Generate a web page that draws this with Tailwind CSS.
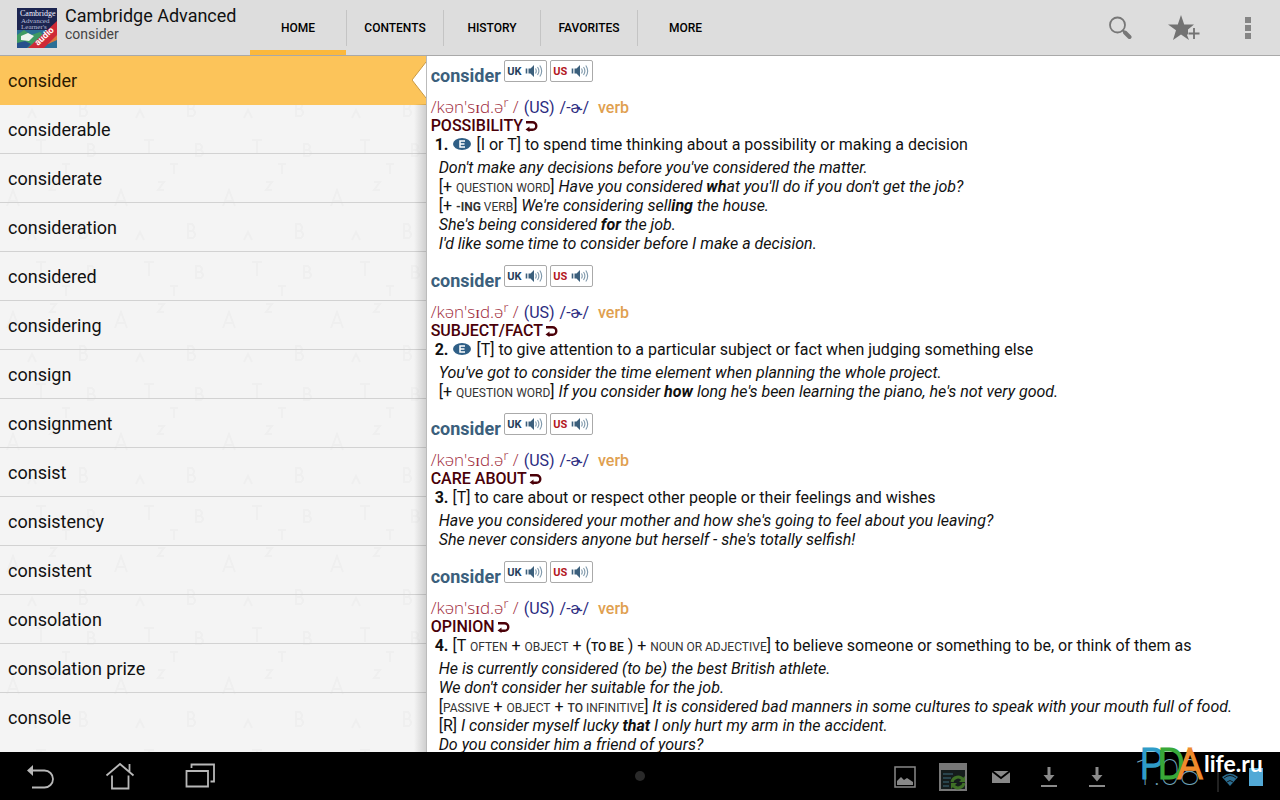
<!DOCTYPE html>
<html lang="en">
<head>
  <meta charset="UTF-8" />
  <meta name="viewport" content="width=device-width, initial-scale=1.0" />
  <title>Cambridge Advanced - consider</title>
  <script src="https://cdn.jsdelivr.net/npm/@tailwindcss/browser@4"></script>
</head>
<body class="h-screen flex flex-col overflow-hidden bg-white font-[Roboto,'Liberation_Sans',sans-serif] text-[#111]">

  <!-- Shared icons -->
  <svg class="hidden">
    <symbol id="speaker" viewBox="0 0 18 14">
      <path d="M1.500 4.500v5" stroke="#3b5f7c" stroke-width="1.600" fill="none" />
      <path d="M3.500 4.500h2L9 1v12L5.500 9.500h-2z" fill="#3b5f7c" />
      <path d="M10.500 4.500q1.500 2.500 0 5M12.500 3q2.800 4 0 8M14.800 1.500q3.800 5.500 0 11" stroke="#7d97aa" stroke-width="1.100" fill="none" />
    </symbol>
    <symbol id="level" viewBox="0 0 18 12">
      <ellipse cx="9" cy="6" rx="9" ry="6" fill="#2f5f86" />
      <path d="M12 3H7v6h5M7 6h4.500" stroke="#fff" stroke-width="1.500" fill="none" />
    </symbol>
    <symbol id="turn" viewBox="0 0 13 12">
      <path d="M1 2.200h6.500a3.800 3.800 0 0 1 0 7.600H3" stroke="#4a0008" stroke-width="2.400" fill="none" />
      <path d="M4.500 6.500V12L0.500 9.500z" fill="#4a0008" />
    </symbol>
    <symbol id="download" viewBox="0 0 18 22">
      <path d="M7.500 1h3v8h4L9 15.500 3.500 9h4zM1 19h16v2H1z" fill="#8a8a8a" />
    </symbol>
  </svg>

  <!-- Action bar -->
  <header class="h-14 shrink-0 flex items-stretch bg-[#dddddd] border-b border-[#a9a9a9]">
    <div class="w-[250px] flex items-center gap-2 pl-[17px]">
      <svg class="w-10 h-10 shrink-0" viewBox="0 0 40 40">
        <rect width="40" height="40" fill="#1c2550" />
        <path d="M0 22h40v18H0z" fill="#2b6f96" />
        <path d="M0 27l7-5 7 5 9-3 4 4-16 12H0z" fill="#3f9a62" />
        <path d="M4 28l7-3 6 3-5 5-8-1z" fill="#eef2ee" />
        <path d="M0 35l8-2 6 3-4 4H0z" fill="#27508c" />
        <path d="M27 32l13-6v6l-9 4z" fill="#d9773c" />
        <path d="M11 40l29-27v14L27 40z" fill="#cf2a36" />
        <text x="3" y="8" font-size="8" fill="#f4f4ff" font-family="Liberation Serif, serif">Cambridge</text>
        <text x="4" y="15" font-size="7" fill="#b9bfd8" font-family="Liberation Serif, serif">Advanced</text>
        <text x="4" y="21" font-size="7" fill="#b9bfd8" font-family="Liberation Serif, serif">Learner's</text>
        <text x="21" y="38" font-size="9" font-weight="bold" fill="#fff" transform="rotate(-43 21 38)">audio</text>
      </svg>
      <div class="pb-2">
        <h1 class="text-lg leading-5 whitespace-nowrap">Cambridge Advanced</h1>
        <p class="text-sm leading-4 text-[#444]">consider</p>
      </div>
    </div>

    <nav class="flex text-xs font-medium text-black">
      <a href="#" class="w-24 flex items-center justify-center border-b-[5px] border-[#fbb83c] pt-[5px]">HOME</a>
      <a href="#" class="w-[97px] flex items-center"><span class="w-full h-9 flex items-center justify-center border-l border-[#c4c4c4]">CONTENTS</span></a>
      <a href="#" class="w-[97px] flex items-center"><span class="w-full h-9 flex items-center justify-center border-l border-[#c4c4c4]">HISTORY</span></a>
      <a href="#" class="w-[97px] flex items-center"><span class="w-full h-9 flex items-center justify-center border-l border-[#c4c4c4]">FAVORITES</span></a>
      <a href="#" class="w-24 flex items-center"><span class="w-full h-9 flex items-center justify-center border-l border-[#c4c4c4]">MORE</span></a>
    </nav>

    <div class="ml-auto flex">
      <button class="w-16 flex items-center justify-center" aria-label="Search">
        <svg class="w-6 h-6" viewBox="0 0 24 24" fill="none" stroke="#777">
          <circle cx="9.500" cy="9" r="7.500" stroke-width="1.800" />
          <path d="M14.500 14l3 3" stroke-width="2" />
          <path d="M17 16.500l4.500 4.500" stroke-width="4" stroke-linecap="round" />
        </svg>
      </button>
      <button class="w-16 flex items-center justify-center" aria-label="Add to favorites">
        <svg class="w-8 h-[26px]" viewBox="0 0 32 26">
          <path d="M13 0l3.200 9.500H26l-6 5V19l-1 1 2 5-8-5.500L5 25l3-9.700L0 9.500h9.800z" fill="#727272" />
          <path d="M26 13v11M20.500 18.500h11" stroke="#ddd" stroke-width="4" />
          <path d="M26 13v11M20.500 18.500h11" stroke="#727272" stroke-width="1.800" />
        </svg>
      </button>
      <button class="w-16 flex items-center justify-center" aria-label="More options">
        <svg class="w-1.5 h-[22px]" viewBox="0 0 6 22" fill="#858585">
          <rect width="6" height="6" /><rect y="8" width="6" height="6" /><rect y="16" width="6" height="6" />
        </svg>
      </button>
    </div>
  </header>

  <main class="flex-1 min-h-0 flex">

    <!-- Word list -->
    <div class="relative w-1/3 shrink-0 overflow-hidden bg-[#f4f4f4] border-r border-[#bbb]">
      <!-- Faint letter pattern -->
      <svg class="absolute inset-0 w-full h-full" aria-hidden="true">
        <defs>
          <pattern id="letters" width="108" height="122" patternUnits="userSpaceOnUse" fill="none" stroke="#efefef" stroke-width="2">
            <path d="M7 28l6-16 6 16M9 23h8M80 46v14h5q4-3 0-7h-5 4q4-3 0-7zM36 84h10M41 84v14M88 88v12h5q4-3 0-6h-5 4q4-3 0-6zM50 4h6l-6 8h6M28 62l4-8 4 8M62 108h8M66 108v10" />
          </pattern>
        </defs>
        <rect width="100%" height="100%" fill="url(#letters)" />
      </svg>
      <ul class="relative text-lg">
        <li class="relative h-[49px] bg-[#fcc45a]">
          <a href="#" class="h-full flex items-center px-2 text-[#2b1a00]">consider</a>
          <svg class="absolute right-0 top-1.5 w-3.5 h-9" viewBox="0 0 14 36"><path d="M14 0v36L0 18z" fill="#fff" /><path d="M14 0L0 18l14 18" fill="none" stroke="#c99a45" /></svg>
        </li>
        <li class="h-[49px] border-b border-[#d2d2d2]"><a href="#" class="h-full flex items-center px-2 pt-0.5">considerable</a></li>
        <li class="h-[49px] border-b border-[#d2d2d2]"><a href="#" class="h-full flex items-center px-2 pt-0.5">considerate</a></li>
        <li class="h-[49px] border-b border-[#d2d2d2]"><a href="#" class="h-full flex items-center px-2 pt-0.5">consideration</a></li>
        <li class="h-[49px] border-b border-[#d2d2d2]"><a href="#" class="h-full flex items-center px-2 pt-0.5">considered</a></li>
        <li class="h-[49px] border-b border-[#d2d2d2]"><a href="#" class="h-full flex items-center px-2 pt-0.5">considering</a></li>
        <li class="h-[49px] border-b border-[#d2d2d2]"><a href="#" class="h-full flex items-center px-2 pt-0.5">consign</a></li>
        <li class="h-[49px] border-b border-[#d2d2d2]"><a href="#" class="h-full flex items-center px-2 pt-0.5">consignment</a></li>
        <li class="h-[49px] border-b border-[#d2d2d2]"><a href="#" class="h-full flex items-center px-2 pt-0.5">consist</a></li>
        <li class="h-[49px] border-b border-[#d2d2d2]"><a href="#" class="h-full flex items-center px-2 pt-0.5">consistency</a></li>
        <li class="h-[49px] border-b border-[#d2d2d2]"><a href="#" class="h-full flex items-center px-2 pt-0.5">consistent</a></li>
        <li class="h-[49px] border-b border-[#d2d2d2]"><a href="#" class="h-full flex items-center px-2 pt-0.5">consolation</a></li>
        <li class="h-[49px] border-b border-[#d2d2d2]"><a href="#" class="h-full flex items-center px-2 pt-0.5">consolation prize</a></li>
        <li class="h-[49px]"><a href="#" class="h-full flex items-center px-2">console</a></li>
      </ul>
      <div class="absolute right-0 top-12 bottom-0 w-3 bg-linear-to-l from-black/15 to-transparent"></div>
    </div>

    <!-- Article -->
    <article class="flex-1 min-w-0 overflow-y-auto [scrollbar-width:none] pl-1 text-base leading-[19px] space-y-2">

      <section>
        <div class="flex items-start gap-[3px] pt-1 pb-[11px]">
          <h2 class="pt-1.5 text-lg leading-5 font-bold text-[#3b5f7c]">consider</h2>
          <button class="w-[43px] h-[22px] flex items-center justify-center gap-1 rounded-xs border border-[#aaa] text-[11px] font-bold text-[#26405c]">UK <svg class="w-[18px] h-3.5"><use href="#speaker" /></svg></button>
          <button class="w-[43px] h-[22px] flex items-center justify-center gap-1 rounded-xs border border-[#aaa] text-[11px] font-bold text-[#b3191f]">US <svg class="w-[18px] h-3.5"><use href="#speaker" /></svg></button>
        </div>
        <p class="h-[19px] flex items-baseline gap-[5px] text-[#2b2b80]"><span class="font-['Open_Sans'] text-[17px] font-light text-[#a02c3c]">/kən'sɪd.ə<sup>r</sup> /</span> <span>(US)</span> <span>/-ɚ/</span> <b class="pl-1 font-medium text-[#e0a050]">verb</b></p>
        <h3 class="flex items-center font-medium text-[#4a0008]">POSSIBILITY<svg class="ml-0.5 w-[13px] h-3"><use href="#turn" /></svg></h3>
        <p class="pl-1"><b>1.</b> <svg class="inline mx-px w-[18px] h-3 align-baseline"><use href="#level" /></svg> [I or T] to spend time thinking about a possibility or making a decision</p>
        <div class="pt-1 pl-2 italic">
          <p>Don't make any decisions before you've considered the matter.</p>
          <p><span class="not-italic">[+ <span class="text-xs text-[#333]">QUESTION WORD</span>]</span> Have you considered <b>wh</b>at you'll do if you don't get the job?</p>
          <p><span class="not-italic">[+ <span class="text-xs text-[#333]"><b>-ING</b> VERB</span>]</span> We're considering sell<b>ing</b> the house.</p>
          <p>She's being considered <b>for</b> the job.</p>
          <p>I'd like some time to consider before I make a decision.</p>
        </div>
      </section>

      <section>
        <div class="flex items-start gap-[3px] pt-1 pb-[11px]">
          <h2 class="pt-1.5 text-lg leading-5 font-bold text-[#3b5f7c]">consider</h2>
          <button class="w-[43px] h-[22px] flex items-center justify-center gap-1 rounded-xs border border-[#aaa] text-[11px] font-bold text-[#26405c]">UK <svg class="w-[18px] h-3.5"><use href="#speaker" /></svg></button>
          <button class="w-[43px] h-[22px] flex items-center justify-center gap-1 rounded-xs border border-[#aaa] text-[11px] font-bold text-[#b3191f]">US <svg class="w-[18px] h-3.5"><use href="#speaker" /></svg></button>
        </div>
        <p class="h-[19px] flex items-baseline gap-[5px] text-[#2b2b80]"><span class="font-['Open_Sans'] text-[17px] font-light text-[#a02c3c]">/kən'sɪd.ə<sup>r</sup> /</span> <span>(US)</span> <span>/-ɚ/</span> <b class="pl-1 font-medium text-[#e0a050]">verb</b></p>
        <h3 class="flex items-center font-medium text-[#4a0008]">SUBJECT/FACT<svg class="ml-0.5 w-[13px] h-3"><use href="#turn" /></svg></h3>
        <p class="pl-1"><b>2.</b> <svg class="inline mx-px w-[18px] h-3 align-baseline"><use href="#level" /></svg> [T] to give attention to a particular subject or fact when judging something else</p>
        <div class="pt-1 pl-2 italic">
          <p>You've got to consider the time element when planning the whole project.</p>
          <p><span class="not-italic">[+ <span class="text-xs text-[#333]">QUESTION WORD</span>]</span> If you consider <b>how</b> long he's been learning the piano, he's not very good.</p>
        </div>
      </section>

      <section>
        <div class="flex items-start gap-[3px] pt-1 pb-[11px]">
          <h2 class="pt-1.5 text-lg leading-5 font-bold text-[#3b5f7c]">consider</h2>
          <button class="w-[43px] h-[22px] flex items-center justify-center gap-1 rounded-xs border border-[#aaa] text-[11px] font-bold text-[#26405c]">UK <svg class="w-[18px] h-3.5"><use href="#speaker" /></svg></button>
          <button class="w-[43px] h-[22px] flex items-center justify-center gap-1 rounded-xs border border-[#aaa] text-[11px] font-bold text-[#b3191f]">US <svg class="w-[18px] h-3.5"><use href="#speaker" /></svg></button>
        </div>
        <p class="h-[19px] flex items-baseline gap-[5px] text-[#2b2b80]"><span class="font-['Open_Sans'] text-[17px] font-light text-[#a02c3c]">/kən'sɪd.ə<sup>r</sup> /</span> <span>(US)</span> <span>/-ɚ/</span> <b class="pl-1 font-medium text-[#e0a050]">verb</b></p>
        <h3 class="flex items-center font-medium text-[#4a0008]">CARE ABOUT<svg class="ml-0.5 w-[13px] h-3"><use href="#turn" /></svg></h3>
        <p class="pl-1"><b>3.</b> [T] to care about or respect other people or their feelings and wishes</p>
        <div class="pt-1 pl-2 italic">
          <p>Have you considered your mother and how she's going to feel about you leaving?</p>
          <p>She never considers anyone but herself - she's totally selfish!</p>
        </div>
      </section>

      <section>
        <div class="flex items-start gap-[3px] pt-1 pb-[11px]">
          <h2 class="pt-1.5 text-lg leading-5 font-bold text-[#3b5f7c]">consider</h2>
          <button class="w-[43px] h-[22px] flex items-center justify-center gap-1 rounded-xs border border-[#aaa] text-[11px] font-bold text-[#26405c]">UK <svg class="w-[18px] h-3.5"><use href="#speaker" /></svg></button>
          <button class="w-[43px] h-[22px] flex items-center justify-center gap-1 rounded-xs border border-[#aaa] text-[11px] font-bold text-[#b3191f]">US <svg class="w-[18px] h-3.5"><use href="#speaker" /></svg></button>
        </div>
        <p class="h-[19px] flex items-baseline gap-[5px] text-[#2b2b80]"><span class="font-['Open_Sans'] text-[17px] font-light text-[#a02c3c]">/kən'sɪd.ə<sup>r</sup> /</span> <span>(US)</span> <span>/-ɚ/</span> <b class="pl-1 font-medium text-[#e0a050]">verb</b></p>
        <h3 class="flex items-center font-medium text-[#4a0008]">OPINION<svg class="ml-0.5 w-[13px] h-3"><use href="#turn" /></svg></h3>
        <p class="pl-1"><b>4.</b> [T <span class="text-xs text-[#333]">OFTEN</span> + <span class="text-xs text-[#333]">OBJECT</span> + (<b class="text-xs font-medium">TO BE</b> ) + <span class="text-xs text-[#333]">NOUN OR ADJECTIVE</span>] to believe someone or something to be, or think of them as</p>
        <div class="pt-1 pl-2 italic">
          <p>He is currently considered (to be) the best British athlete.</p>
          <p>We don't consider her suitable for the job.</p>
          <p><span class="not-italic">[<span class="text-xs text-[#333]">PASSIVE</span> + <span class="text-xs text-[#333]">OBJECT</span> + <span class="text-xs text-[#333]"><b class="font-medium">TO</b> INFINITIVE</span>]</span> It is considered bad manners in some cultures to speak with your mouth full of food.</p>
          <p><span class="not-italic">[R]</span> I consider myself lucky <b>that</b> I only hurt my arm in the accident.</p>
          <p>Do you consider him a friend of yours?</p>
        </div>
      </section>
    </article>
  </main>

  <!-- System bar -->
  <footer class="relative h-12 shrink-0 flex items-center justify-between bg-black">
    <div class="flex">
      <button class="w-20 flex justify-center" aria-label="Back">
        <svg class="w-8 h-8" viewBox="0 0 32 32" fill="none" stroke="#b8b8b8" stroke-width="1.800"><path d="M8 10.500h12.500a8.500 8.500 0 0 1 0 17H8" /><path d="M9 5v11l-6-5.500z" fill="#b8b8b8" stroke="none" /></svg>
      </button>
      <button class="w-20 flex justify-center" aria-label="Home">
        <svg class="w-8 h-8" viewBox="0 0 32 32" fill="none" stroke="#b8b8b8" stroke-width="1.800"><path d="M2.500 15.500L16 4l13.500 11.500M25.500 4v8M8 15.500v13h16.500v-13" /></svg>
      </button>
      <button class="w-20 flex justify-center" aria-label="Recent apps">
        <svg class="w-8 h-8" viewBox="0 0 32 32" fill="none" stroke="#b8b8b8" stroke-width="1.800"><path d="M2.500 11H24v15.500H2.500zM7.500 8V4.500H30v17h-3.500" /></svg>
      </button>
    </div>
    <span class="absolute left-1/2 top-1/2 -translate-1/2 w-2.5 h-2.5 rounded-full bg-[#2a2a2a]"></span>

    <div class="flex items-center pr-[159px] pt-0.5">
      <div class="w-12 flex justify-center">
        <svg class="w-[22px] h-[22px]" viewBox="0 0 22 22"><rect x="1" y="1" width="20" height="20" fill="none" stroke="#888" stroke-width="1.500" /><path d="M3 19v-4l4-4 3 3 3-2 6 4v3z" fill="#888" /></svg>
      </div>
      <div class="w-12 flex justify-center">
        <svg class="w-7 h-7" viewBox="0 0 28 28"><rect x="1" y="1" width="26" height="26" fill="#151c1c" stroke="#777" stroke-width="2" /><path d="M0 0h28v7H0z" fill="#777" /><path d="M4 11h10M4 15h8M4 19h6M4 23h6" stroke="#31505c" stroke-width="1.500" /><path d="M13 19a6 6 0 0 1 11-2M25 20a6 6 0 0 1-11 2" fill="none" stroke="#3f7026" stroke-width="3" /><path d="M26 13v6h-6zM12 26v-6h6z" fill="#3f7026" /></svg>
      </div>
      <div class="w-12 flex justify-center">
        <svg class="w-[18px] h-3.5" viewBox="0 0 18 14"><path d="M0 1h18v12H0z" fill="#888" /><path d="M0 1l9 7 9-7" fill="none" stroke="#000" stroke-width="1.800" /></svg>
      </div>
      <div class="w-12 flex justify-center"><svg class="w-[18px] h-[22px]"><use href="#download" /></svg></div>
      <div class="w-12 flex justify-center"><svg class="w-[18px] h-[22px]"><use href="#download" /></svg></div>
    </div>

    <!-- Clock, status and site mark -->
    <svg class="absolute right-0 bottom-0 w-[150px] h-14" viewBox="0 0 150 56" font-family="Roboto, sans-serif">
      <text x="4" y="41" font-size="36" font-weight="100" fill="#6fa3b8">1:08</text>
      <path d="M88 26v22" stroke="#444" />
      <path d="M92 33q8-7 16 0l-8 9z" fill="#2b6e92" />
      <path d="M94 34q6-5 12 0M97 38q3-3 6 0" stroke="#111" fill="none" />
      <rect x="119" y="24" width="14" height="18" fill="#52a9d6" />
      <g font-weight="100" stroke-width="3" font-size="40">
        <text x="10" y="34" fill="#2f9cc8" stroke="#2f9cc8">P</text>
        <text x="28" y="34" fill="#38a838" stroke="#38a838">D</text>
        <text x="48" y="34" fill="#ee8a2c" stroke="#ee8a2c">A</text>
      </g>
      <text x="74" y="28" font-size="23" font-weight="bold" fill="#fff" font-family="Lato, sans-serif">life.ru</text>
    </svg>
  </footer>

</body>
</html>
